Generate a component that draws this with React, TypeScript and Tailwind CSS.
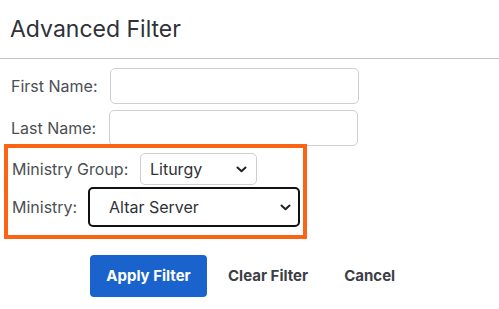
import React from "react";

const Chevron = () => (
  <svg width="11" height="7" viewBox="0 0 11 7" className="shrink-0">
    <path d="M1.5 1.5 L5.5 5.3 L9.5 1.5" fill="none" stroke="#222" strokeWidth="2" strokeLinecap="round" strokeLinejoin="round" />
  </svg>
);

const App = () => {
  return (
    <div className="w-[499px] h-[309px] bg-white overflow-hidden font-['Inter',sans-serif] text-[#4b4f54]">
      <div className="h-[59px] border-b border-[#c4c4c4] flex items-center pl-[10px] pt-[1px]">
        <div className="text-[23px] text-[#2f3237]">Advanced Filter</div>
      </div>
      <div className="pt-[9px] flex flex-col">
        <div className="flex items-center h-[36px] pl-[11px] gap-[9px]">
          <span className="text-[16px] w-[90px] whitespace-nowrap">First Name:</span>
          <div className="w-[249px] h-[36px] border border-[#cfcfcf] rounded-[5px]" />
        </div>
        <div className="flex items-center h-[36px] mt-[6px] pl-[11px] gap-[8px]">
          <span className="text-[16px] w-[90px] whitespace-nowrap">Last Name:</span>
          <div className="w-[249px] h-[36px] border border-[#cfcfcf] rounded-[5px]" />
        </div>
        <div className="ml-[4px] -mt-[2px] w-[303px] h-[95px] border-4 border-[#fa6414] pl-[4px] pt-[5px] flex flex-col gap-[2px]">
          <div className="flex items-center h-[32px] gap-[8px]">
            <span className="text-[16px] w-[120px] whitespace-nowrap">Ministry Group:</span>
            <div className="w-[117px] h-[32px] border border-[#cfcfcf] rounded-[5px] flex items-center justify-between pl-[9px] pr-[9px] text-[16px] text-[#2f3237]">
              <span>Liturgy</span>
              <Chevron />
            </div>
          </div>
          <div className="flex items-center h-[40px] gap-[10px]">
            <span className="text-[16px] w-[66px] whitespace-nowrap">Ministry:</span>
            <div className="w-[212px] h-[40px] border-2 border-[#111] rounded-[5px] flex items-center justify-between pl-[19px] pr-[7px] text-[16px] text-[#2f3237]">
              <span>Altar Server</span>
              <Chevron />
            </div>
          </div>
        </div>
        <div className="flex items-center mt-[16px] pl-[90px]">
          <button className="w-[117px] h-[42px] rounded-[4px] bg-[#1a63cc] text-white text-[15px] font-bold">Apply Filter</button>
          <button className="ml-[21px] text-[15px] font-bold text-[#3c3f44]">Clear Filter</button>
          <button className="ml-[36px] text-[15px] font-bold text-[#3c3f44]">Cancel</button>
        </div>
      </div>
    </div>
  );
};

export default App;
